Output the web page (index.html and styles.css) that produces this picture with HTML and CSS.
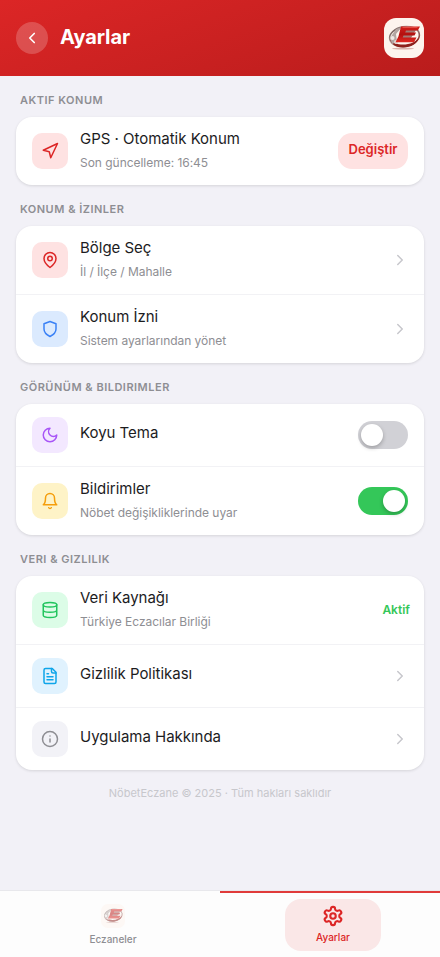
FILE: index.html
```html
<!DOCTYPE html>
<html lang="tr">
<head>
<meta charset="utf-8">
<meta name="viewport" content="width=device-width, initial-scale=1">
<title>Ayarlar</title>
<link rel="stylesheet" href="styles.css">
</head>
<body>
<svg width="0" height="0" class="defs" aria-hidden="true">
  <defs>
    <linearGradient id="metal" x1="0" y1="0" x2="1" y2="1"><stop offset="0" stop-color="#4e3532"/><stop offset=".35" stop-color="#b8aaa7"/><stop offset=".65" stop-color="#8b7471"/><stop offset="1" stop-color="#a2281f"/></linearGradient>
    <linearGradient id="ered" x1="0" y1="0" x2="0" y2="1"><stop offset="0" stop-color="#d3201c"/><stop offset=".5" stop-color="#b3100f"/><stop offset="1" stop-color="#e02822"/></linearGradient>
    <symbol id="logo" viewBox="0 0 40 40">
      <rect width="40" height="40" fill="#fdf4ee"/>
      <ellipse cx="19" cy="30.600" rx="11" ry="1" fill="#a45149" opacity=".4"/>
      <ellipse cx="20.500" cy="18.500" rx="15" ry="9.800" fill="none" stroke="url(#metal)" stroke-width="1.600" transform="rotate(-10 20.500 18.500)"/>
      <path d="M6 21c3 4 7 5.500 13 5.500 7 0 13-2.500 16-7-1 6-8 10-16 10-7 0-12-3-13-8.500z" fill="#8d211c"/>
      <path d="M6 20l6-9 6-2-6 7 1 8-5 2z" fill="#b3a5a2"/>
      <circle cx="8.500" cy="20" r="2" fill="#eee8e6"/>
      <circle cx="12" cy="24" r="2" fill="#e3d9d6"/>
      <path d="M20 12h12l-5 8H17z" fill="#5a1512" opacity=".55"/>
      <path d="M17 8.500h19l-2.200 4.100H22l-.8 1.800H32l-1.500 3.200H19.500l-.8 1.800H32.500l-2.500 4.800H11.500l3-6z" fill="url(#ered)"/>
      <path d="M18.500 9.500h15" stroke="#ef6258" stroke-width=".7"/>
    </symbol>
    <symbol id="chev" viewBox="0 0 24 24"><path d="m9 18 6-6-6-6"/></symbol>
  </defs>
</svg>
<div class="app">
  <header class="header">
    <button class="back" aria-label="Geri"><svg class="ico" viewBox="0 0 24 24"><path d="m15 18-6-6 6-6"/></svg></button>
    <h1>Ayarlar</h1>
    <svg class="logo"><use href="#logo"/></svg>
  </header>
  <main class="content">
    <h2>AKTIF KONUM</h2>
    <section class="card">
      <div class="row">
        <span class="tile red"><svg class="ico" viewBox="0 0 24 24"><path d="M3 11 22 2l-9 19-2-8z"/></svg></span>
        <div class="text"><p class="title">GPS · Otomatik Konum</p><p class="sub">Son güncelleme: 16:45</p></div>
        <button class="change">Değiştir</button>
      </div>
    </section>
    <h2>KONUM &amp; İZINLER</h2>
    <section class="card">
      <div class="row">
        <span class="tile red"><svg class="ico" viewBox="0 0 24 24"><path d="M20 10c0 6-8 12-8 12s-8-6-8-12a8 8 0 0 1 16 0z"/><circle cx="12" cy="10" r="3"/></svg></span>
        <div class="text"><p class="title">Bölge Seç</p><p class="sub">İl / İlçe / Mahalle</p></div>
        <svg class="ico chevron"><use href="#chev"/></svg>
      </div>
      <div class="row">
        <span class="tile blue"><svg class="ico" viewBox="0 0 24 24"><path d="M12 22s8-4 8-10V5l-8-3-8 3v7c0 6 8 10 8 10z"/></svg></span>
        <div class="text"><p class="title">Konum İzni</p><p class="sub">Sistem ayarlarından yönet</p></div>
        <svg class="ico chevron"><use href="#chev"/></svg>
      </div>
    </section>
    <h2>GÖRÜNÜM &amp; BILDIRIMLER</h2>
    <section class="card">
      <div class="row single">
        <span class="tile purple"><svg class="ico" viewBox="0 0 24 24"><path d="M12 3a6 6 0 0 0 9 9 9 9 0 1 1-9-9z"/></svg></span>
        <div class="text"><p class="title">Koyu Tema</p></div>
        <span class="switch"><span class="knob"></span></span>
      </div>
      <div class="row">
        <span class="tile amber"><svg class="ico" viewBox="0 0 24 24"><path d="M6 8a6 6 0 0 1 12 0c0 7 3 9 3 9H3s3-2 3-9"/><path d="M10.300 21a1.940 1.940 0 0 0 3.400 0"/></svg></span>
        <div class="text"><p class="title">Bildirimler</p><p class="sub">Nöbet değişikliklerinde uyar</p></div>
        <span class="switch on"><span class="knob"></span></span>
      </div>
    </section>
    <h2>VERI &amp; GIZLILIK</h2>
    <section class="card">
      <div class="row">
        <span class="tile green"><svg class="ico" viewBox="0 0 24 24"><ellipse cx="12" cy="5" rx="9" ry="3"/><path d="M3 5v14a9 3 0 0 0 18 0V5M3 12a9 3 0 0 0 18 0"/></svg></span>
        <div class="text"><p class="title">Veri Kaynağı</p><p class="sub">Türkiye Eczacılar Birliği</p></div>
        <span class="status">Aktif</span>
      </div>
      <div class="row single">
        <span class="tile sky"><svg class="ico" viewBox="0 0 24 24"><path d="M15 2H6a2 2 0 0 0-2 2v16a2 2 0 0 0 2 2h12a2 2 0 0 0 2-2V7z"/><path d="M14 2v4a2 2 0 0 0 2 2h4M10 9H8M16 13H8M16 17H8"/></svg></span>
        <div class="text"><p class="title">Gizlilik Politikası</p></div>
        <svg class="ico chevron"><use href="#chev"/></svg>
      </div>
      <div class="row single">
        <span class="tile gray"><svg class="ico" viewBox="0 0 24 24"><circle cx="12" cy="12" r="10"/><path d="M12 16v-4M12 8h.01"/></svg></span>
        <div class="text"><p class="title">Uygulama Hakkında</p></div>
        <svg class="ico chevron"><use href="#chev"/></svg>
      </div>
    </section>
    <p class="copyright">NöbetEczane © 2025 · Tüm hakları saklıdır</p>
  </main>
  <nav class="nav">
    <a class="tab"><span class="pill"><svg class="tablogo"><use href="#logo"/></svg><span class="tablabel">Eczaneler</span></span></a>
    <a class="tab active"><span class="pill"><svg class="ico gear" viewBox="0 0 24 24"><path d="M12.220 2h-.44a2 2 0 0 0-2 2v.18a2 2 0 0 1-1 1.730l-.43.25a2 2 0 0 1-2 0l-.15-.08a2 2 0 0 0-2.730.73l-.22.38a2 2 0 0 0 .73 2.730l.15.1a2 2 0 0 1 1 1.720v.51a2 2 0 0 1-1 1.740l-.15.09a2 2 0 0 0-.73 2.730l.22.38a2 2 0 0 0 2.730.73l.15-.08a2 2 0 0 1 2 0l.43.25a2 2 0 0 1 1 1.730V20a2 2 0 0 0 2 2h.44a2 2 0 0 0 2-2v-.18a2 2 0 0 1 1-1.730l.43-.25a2 2 0 0 1 2 0l.15.08a2 2 0 0 0 2.730-.73l.22-.39a2 2 0 0 0-.73-2.730l-.15-.08a2 2 0 0 1-1-1.740v-.5a2 2 0 0 1 1-1.740l.15-.09a2 2 0 0 0 .73-2.730l-.22-.38a2 2 0 0 0-2.730-.73l-.15.08a2 2 0 0 1-2 0l-.43-.25a2 2 0 0 1-1-1.730V4a2 2 0 0 0-2-2z"/><circle cx="12" cy="12" r="3"/></svg><span class="tablabel">Ayarlar</span></span></a>
  </nav>
</div>
</body>
</html>
```

FILE: styles.css
```css
* { box-sizing: border-box; margin: 0; padding: 0; }
body { font-family: Inter, sans-serif; background: #f2f1f7; color: #1c1c1e; }
button { border: 0; font: inherit; }
.defs { position: absolute; }
.app { height: 957px; display: flex; flex-direction: column; overflow: hidden; }
.ico { fill: none; stroke: currentColor; stroke-width: 2; stroke-linecap: round; stroke-linejoin: round; width: 18px; height: 18px; display: block; flex: none; }

.header { height: 76px; flex: none; padding: 0 16px; display: flex; align-items: center; gap: 12px; background: linear-gradient(160deg, #dc2626, #b91c1c); color: #fff; }
.back { width: 32px; height: 32px; border-radius: 50%; background: rgba(255,255,255,.2); color: #fff; display: grid; place-items: center; }
.back .ico { stroke-width: 2.2; }
.header h1 { flex: 1; font-size: 20px; font-weight: 700; line-height: 24px; padding-bottom: 2px; letter-spacing: -.1px; }
.logo { width: 40px; height: 40px; border-radius: 12px; }

.content { flex: 1; padding: 0 16px; }
.content h2 { height: 40.700px; padding: 16.800px 4px 0; font-size: 11px; line-height: 14px; font-weight: 600; letter-spacing: .5px; color: #8e8e93; }
.card { background: #fff; border-radius: 16px; overflow: hidden; box-shadow: 0 1px 3px rgba(0,0,0,.12); }
.row { height: 68.200px; padding: 0 16px; display: flex; align-items: center; gap: 12px; }
.row.single { height: 62px; }
.row + .row { border-top: 1px solid #f2f2f5; height: 69.200px; }
.row + .row.single { height: 63px; }
.tile { width: 36px; height: 36px; border-radius: 10px; display: grid; place-items: center; flex: none; }
.red { background: #fee2e2; color: #dc2626; }
.blue { background: #dbeafe; color: #3b82f6; }
.purple { background: #f3e8ff; color: #a855f7; }
.amber { background: #fef3c7; color: #f59e0b; }
.green { background: #dcfce7; color: #22c55e; }
.sky { background: #e0f2fe; color: #0ea5e9; }
.gray { background: #f2f2f7; color: #8e8e93; }
.text { flex: 1; }
.title { font-size: 15px; line-height: 19px; letter-spacing: -.02px; }
.single .title { padding-bottom: 4.600px; }
.sub { font-size: 12px; line-height: 21px; margin-top: 3.600px; margin-bottom: -.6px; letter-spacing: -.03px; color: #8e8e93; }
.chevron { color: #c7c7cc; margin-right: -1px; }
.change { width: 70px; height: 36px; border-radius: 14px; background: #fee2e2; color: #dc2626; font-size: 13px; font-weight: 600; line-height: 16px; padding-bottom: 3px; }
.status { color: #34c759; font-size: 12px; font-weight: 600; margin-right: -2px; }
.switch { width: 50px; height: 28px; border-radius: 14px; padding: 3px; background: #d1d1d6; display: flex; }
.switch.on { background: #34c759; justify-content: flex-end; }
.knob { width: 22px; height: 22px; border-radius: 50%; background: #fff; box-shadow: 0 2px 4px rgba(0,0,0,.25); }
.copyright { padding-top: 16.400px; text-align: center; font-size: 11px; line-height: 14px; color: #c7c7cc; }

.nav { height: 66px; flex: none; display: flex; background: #fdfdfd; box-shadow: 0 -1px 0 #e8e8ec; }
.tab { flex: 1; display: flex; justify-content: center; padding: 8px 0 0 6px; border-top: 2px solid transparent; color: #8e8e93; }
.tab.active { border-color: #e03a3a; color: #dc2626; padding-top: 6px; }
.pill { width: 96px; height: 52px; border-radius: 16px; display: flex; flex-direction: column; align-items: center; padding-top: 3px; gap: 4px; }
.active .pill { background: #fae7e7; padding-top: 6px; }
.tablogo { width: 24px; height: 24px; border-radius: 7px; opacity: .5; }
.gear { width: 22px; height: 22px; stroke-width: 2.3; }
.tablabel { font-size: 10px; line-height: 14px; font-weight: 500; }
.active .tablabel { margin-top: -1px; }
```
